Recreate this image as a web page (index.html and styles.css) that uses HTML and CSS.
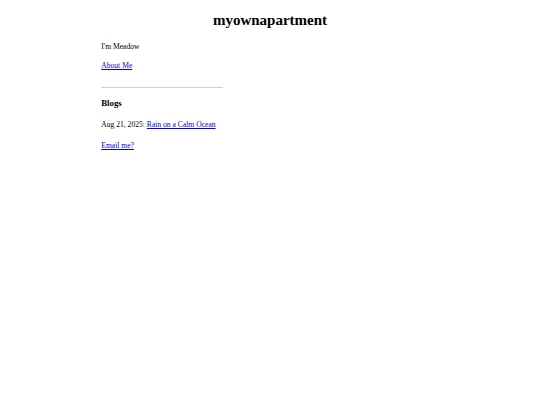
FILE: index.html
```html
<!DOCTYPE html>
<html>
<head>
<meta charset="utf-8">
<title>myownapartment</title>
<link rel="stylesheet" href="styles.css">
</head>
<body>
<header class="site-header">
  <h1 class="site-title">myownapartment</h1>
</header>
<main class="content">
  <p class="intro">I'm Meadow</p>
  <p class="about"><a href="#">About Me</a></p>
  <hr class="divider">
  <h3 class="section-title">Blogs</h3>
  <p class="post">Aug 21, 2025: <a href="#">Rain on a Calm Ocean</a></p>
  <p class="email"><a href="#">Email me?</a></p>
</main>
</body>
</html>
```
FILE: styles.css
```css
html {
  font-size: 7.6px;
}
body {
  margin: 0;
  padding: 0 3.75px;
  font-family: "Liberation Serif", "Times New Roman", serif;
  font-size: 7.6px;
  line-height: 11.25px;
  color: #000;
  background: #fff;
}
.site-header {
  padding-top: 12px;
}
.site-title {
  text-align: center;
  font-size: 15px;
  line-height: 17.25px;
  margin: 0;
}
.content {
  max-width: 337.5px;
  margin: 0 auto;
  padding-top: 12px;
}
.content p {
  margin: 0;
}
.content a {
  color: #0000ee;
}
.about {
  padding-top: 7.3px;
}
.divider {
  width: 36%;
  margin: 16px 0 0 0;
  border: 0;
  border-top: 1px solid #cfcfcf;
  height: 0;
}
.section-title {
  font-size: 8.8px;
  line-height: 13.2px;
  margin: 9px 0 0 0;
}
.post {
  padding-top: 8.4px;
}
.email {
  padding-top: 9.8px;
}
```
